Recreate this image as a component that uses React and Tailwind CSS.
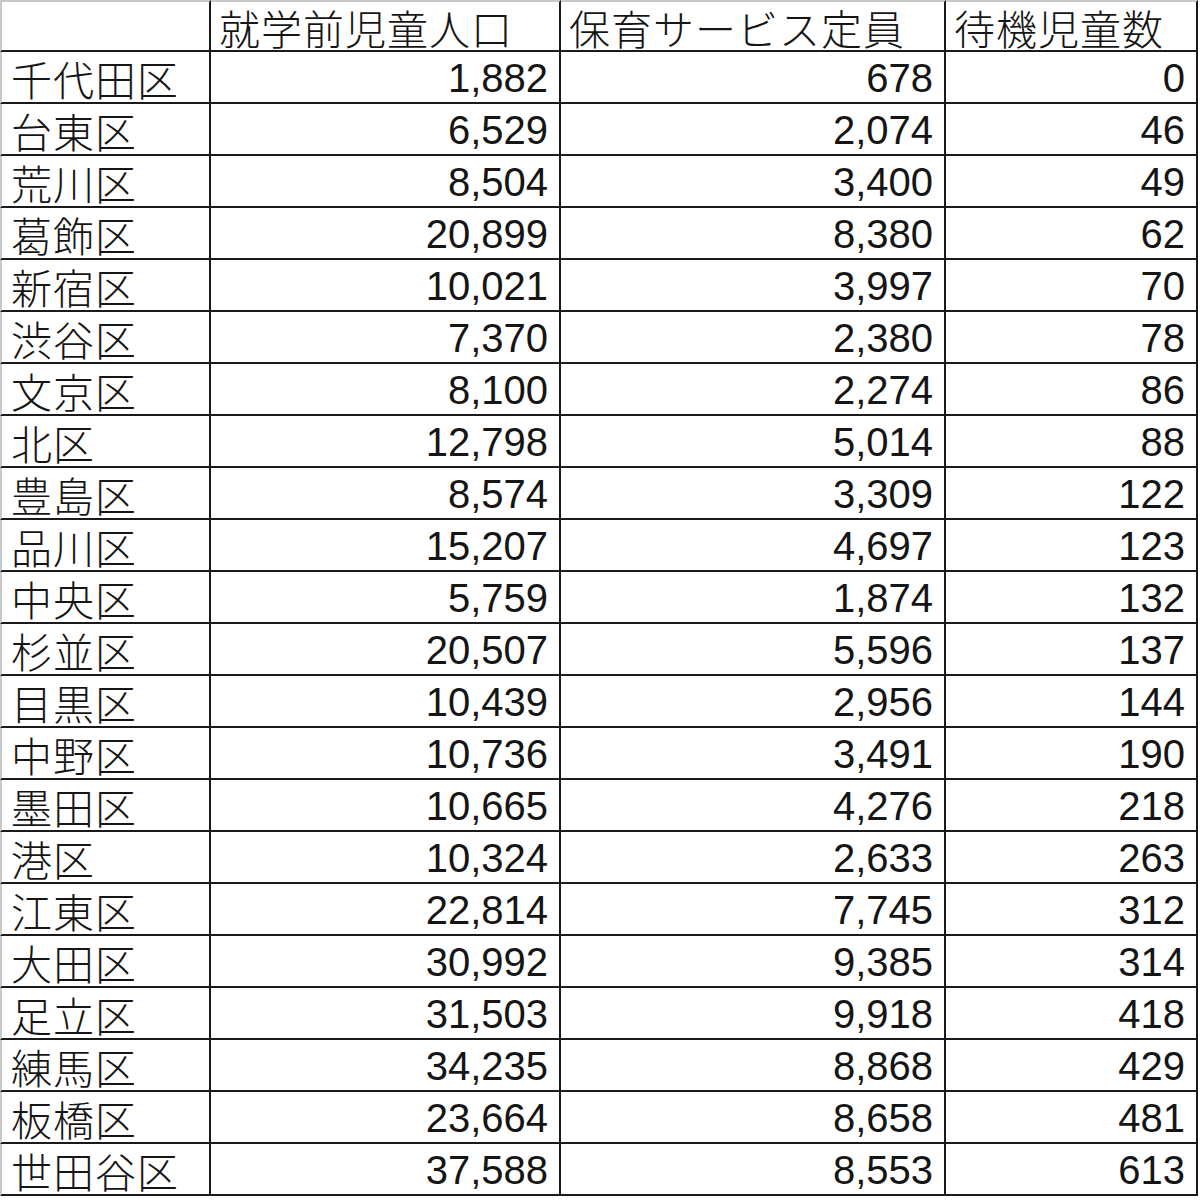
const rows = [
  ['千代田区', '1,882', '678', '0'],
  ['台東区', '6,529', '2,074', '46'],
  ['荒川区', '8,504', '3,400', '49'],
  ['葛飾区', '20,899', '8,380', '62'],
  ['新宿区', '10,021', '3,997', '70'],
  ['渋谷区', '7,370', '2,380', '78'],
  ['文京区', '8,100', '2,274', '86'],
  ['北区', '12,798', '5,014', '88'],
  ['豊島区', '8,574', '3,309', '122'],
  ['品川区', '15,207', '4,697', '123'],
  ['中央区', '5,759', '1,874', '132'],
  ['杉並区', '20,507', '5,596', '137'],
  ['目黒区', '10,439', '2,956', '144'],
  ['中野区', '10,736', '3,491', '190'],
  ['墨田区', '10,665', '4,276', '218'],
  ['港区', '10,324', '2,633', '263'],
  ['江東区', '22,814', '7,745', '312'],
  ['大田区', '30,992', '9,385', '314'],
  ['足立区', '31,503', '9,918', '418'],
  ['練馬区', '34,235', '8,868', '429'],
  ['板橋区', '23,664', '8,658', '481'],
  ['世田谷区', '37,588', '8,553', '613'],
];

const headers = ['', '就学前児童人口', '保育サービス定員', '待機児童数'];

const jp = "font-['Noto_Sans_CJK_JP',sans-serif] font-light";
const num = "font-['Liberation_Sans','Arial',sans-serif]";

export default function App() {
  return (
    <div className="w-[1200px] h-[1200px] bg-white text-[#151515] overflow-hidden">
      <div className="grid grid-cols-[211px_350px_385px_252px] auto-rows-[52px]">
        {headers.map((h, i) => (
          <div
            key={i}
            className={`flex items-end pl-[8px] pb-[1px] border-t-2 border-t-[#c8c8c8] border-b-2 border-r-2 border-b-[#1a1a1a] border-r-[#1a1a1a] text-[41px] tracking-[1px] leading-[44px] whitespace-nowrap ${jp} ${i === 0 ? 'border-l-2 border-l-[#c8c8c8]' : ''}`}
          >
            {h}
          </div>
        ))}
        {rows.map((r) =>
          r.map((c, i) =>
            i === 0 ? (
              <div
                key={r[0] + i}
                className={`flex items-end pl-[9px] pb-[2px] border-l-2 border-l-[#c8c8c8] border-b-2 border-r-2 border-b-[#1a1a1a] border-r-[#1a1a1a] text-[41px] tracking-[1px] leading-[44px] whitespace-nowrap ${jp}`}
              >
                {c}
              </div>
            ) : (
              <div
                key={r[0] + i}
                className={`flex items-end justify-end pb-[4px] pr-[11px] border-b-2 border-r-2 border-b-[#1a1a1a] border-r-[#1a1a1a] text-[40px] leading-none ${num}`}
              >
                {c}
              </div>
            )
          )
        )}
      </div>
    </div>
  );
}
